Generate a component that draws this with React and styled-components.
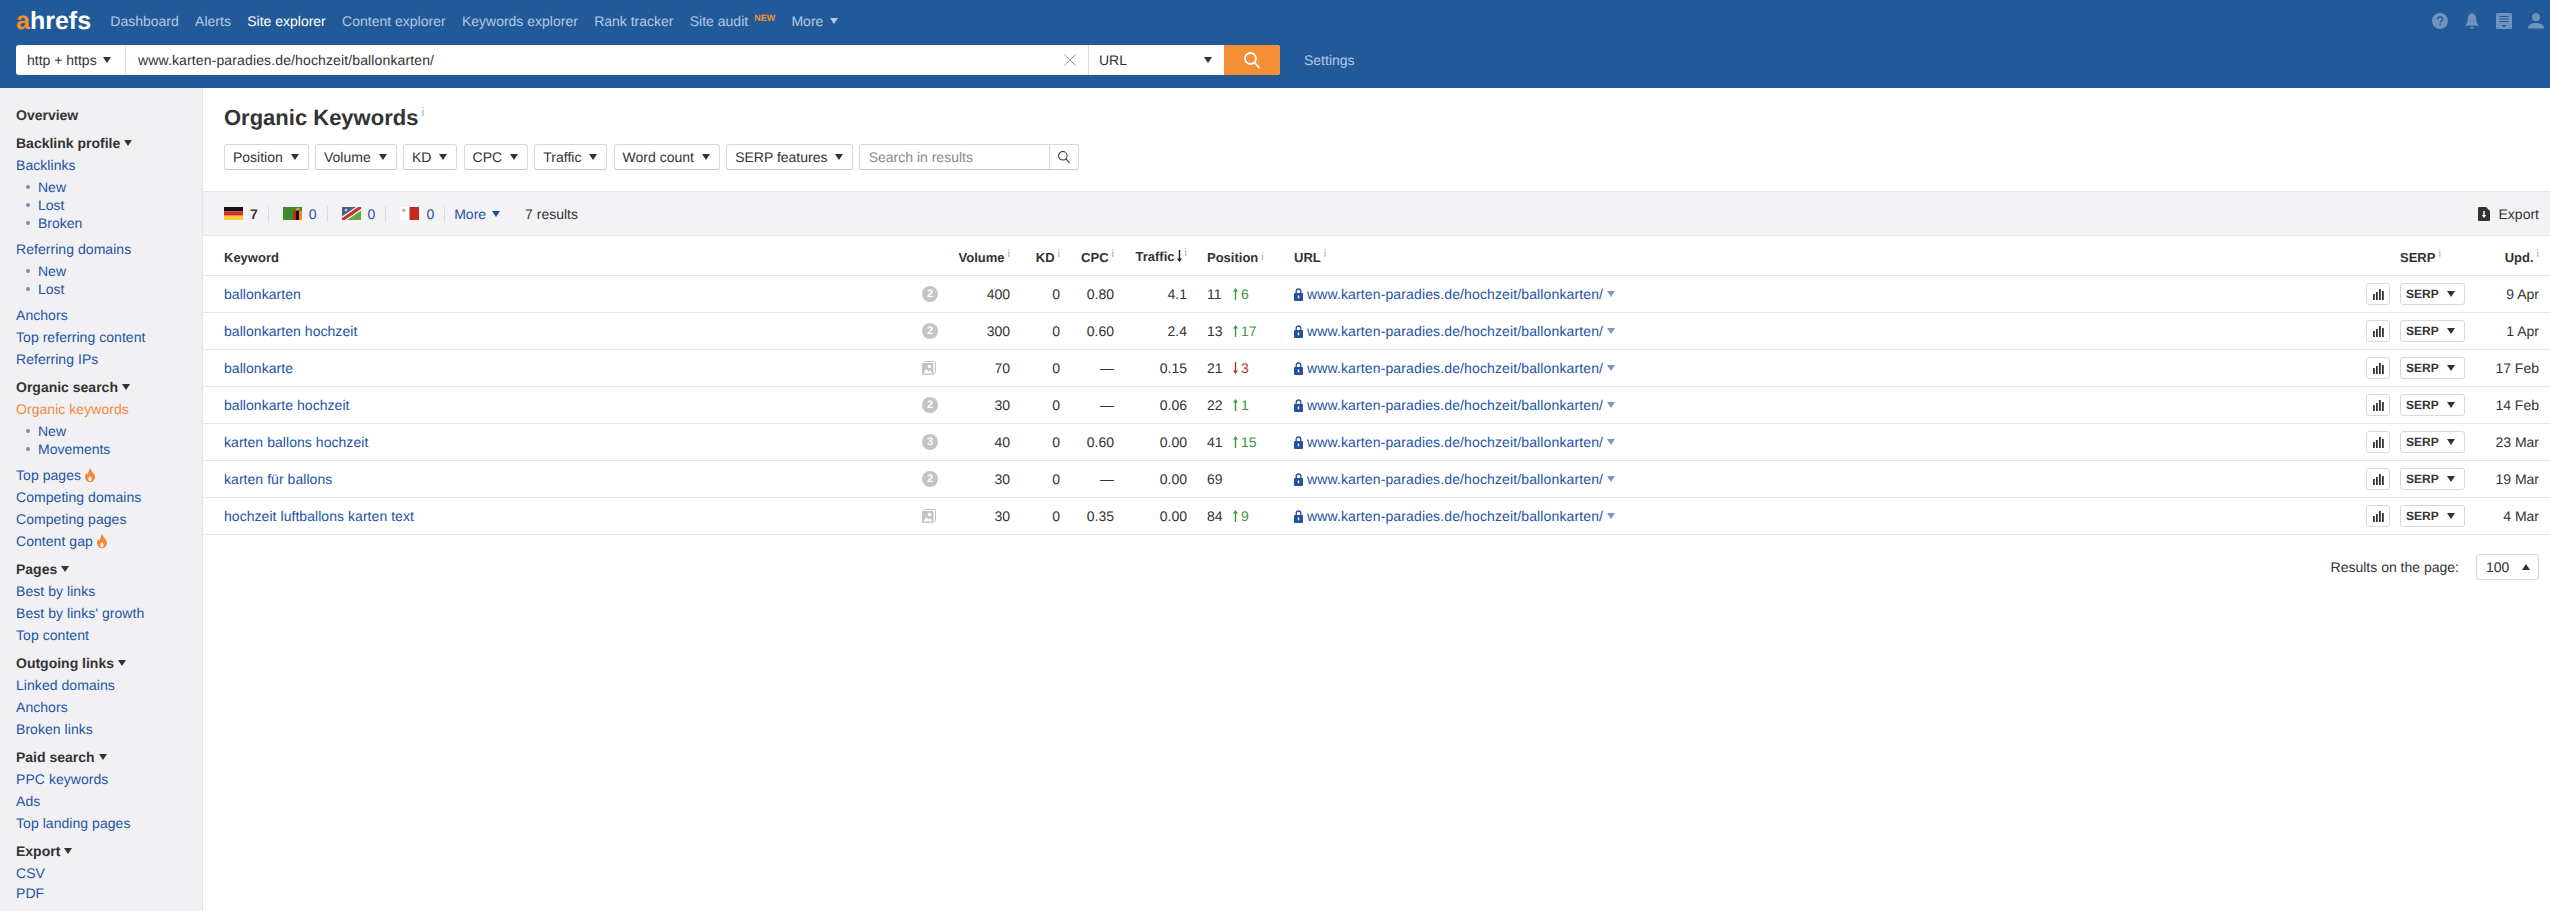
import React from 'react';
import styled, { createGlobalStyle } from 'styled-components';

const GlobalStyle = createGlobalStyle`
  html, body {
    margin: 0;
    padding: 0;
    background: #fff;
    font-family: "Liberation Sans", Arial, sans-serif;
    font-size: 14px;
    color: #333;
    text-rendering: geometricPrecision;
  }
  * { box-sizing: border-box; }
`;

const navItems = ['Dashboard', 'Alerts', 'Site explorer', 'Content explorer', 'Keywords explorer', 'Rank tracker'];

const sidebar = [
  { head: 'Overview', plain: true },
  {
    head: 'Backlink profile',
    links: [
      { label: 'Backlinks', sub: ['New', 'Lost', 'Broken'] },
      { label: 'Referring domains', sub: ['New', 'Lost'] },
      { label: 'Anchors' },
      { label: 'Top referring content' },
      { label: 'Referring IPs' },
    ],
  },
  {
    head: 'Organic search',
    links: [
      { label: 'Organic keywords', active: true, sub: ['New', 'Movements'] },
      { label: 'Top pages', hot: true },
      { label: 'Competing domains' },
      { label: 'Competing pages' },
      { label: 'Content gap', hot: true },
    ],
  },
  { head: 'Pages', links: [{ label: 'Best by links' }, { label: "Best by links' growth" }, { label: 'Top content' }] },
  {
    head: 'Outgoing links',
    links: [{ label: 'Linked domains' }, { label: 'Anchors' }, { label: 'Broken links' }],
  },
  { head: 'Paid search', links: [{ label: 'PPC keywords' }, { label: 'Ads' }, { label: 'Top landing pages' }] },
  { head: 'Export', links: [{ label: 'CSV' }, { label: 'PDF', tight: true }] },
];

const filters = ['Position', 'Volume', 'KD', 'CPC', 'Traffic', 'Word count', 'SERP features'];

const rows = [
  { kw: 'ballonkarten', serp: '2', vol: '400', cpc: '0.80', traffic: '4.1', pos: '11', change: 6, date: '9 Apr' },
  { kw: 'ballonkarten hochzeit', serp: '2', vol: '300', cpc: '0.60', traffic: '2.4', pos: '13', change: 17, date: '1 Apr' },
  { kw: 'ballonkarte', serp: 'img', vol: '70', cpc: '—', traffic: '0.15', pos: '21', change: -3, date: '17 Feb' },
  { kw: 'ballonkarte hochzeit', serp: '2', vol: '30', cpc: '—', traffic: '0.06', pos: '22', change: 1, date: '14 Feb' },
  { kw: 'karten ballons hochzeit', serp: '3', vol: '40', cpc: '0.60', traffic: '0.00', pos: '41', change: 15, date: '23 Mar' },
  { kw: 'karten für ballons', serp: '2', vol: '30', cpc: '—', traffic: '0.00', pos: '69', date: '19 Mar' },
  { kw: 'hochzeit luftballons karten text', serp: 'img', vol: '30', cpc: '0.35', traffic: '0.00', pos: '84', change: 9, date: '4 Mar' },
];

const FlagDE = () => (
  <svg width="19" height="13" viewBox="0 0 19 13">
    <rect width="19" height="4.4" fill="#111" />
    <rect y="4.4" width="19" height="4.3" fill="#d32f23" />
    <rect y="8.7" width="19" height="4.3" fill="#fbcb3c" />
  </svg>
);

const FlagZM = () => (
  <svg width="19" height="13" viewBox="0 0 19 13">
    <rect width="19" height="13" fill="#3f8a2a" />
    <rect x="10" y="4" width="3" height="9" fill="#c8281f" />
    <rect x="13" y="4" width="3" height="9" fill="#151515" />
    <rect x="16" y="4" width="3" height="9" fill="#ea8a2e" />
    <rect x="13" y="1" width="4" height="2" fill="#ea8a2e" />
  </svg>
);

const FlagNA = () => (
  <svg width="19" height="13" viewBox="0 0 19 13">
    <rect width="19" height="13" fill="#6aa744" />
    <polygon points="0,0 19,0 0,13" fill="#3f5fa8" />
    <polygon points="0,9.5 14,0 19,0 19,3.5 5,13 0,13" fill="#fff" />
    <polygon points="0,11 16,0 19,0 19,2 3,13 0,13" fill="#c9352c" />
    <circle cx="4" cy="3" r="1.3" fill="#f5d547" />
  </svg>
);

const FlagMT = () => (
  <svg width="19" height="13" viewBox="0 0 19 13">
    <rect width="9.5" height="13" fill="#fff" />
    <rect x="9.5" width="9.5" height="13" fill="#c4281c" />
    <path d="M2 2.8h1.2V1.6h1.2v1.2h1.2V4H4.4v1.2H3.2V4H2z" fill="#a9a9a9" />
  </svg>
);

const countries = [
  { Flag: FlagDE, count: 7, current: true },
  { Flag: FlagZM, count: 0 },
  { Flag: FlagNA, count: 0 },
  { Flag: FlagMT, count: 0 },
];

const Flame = () => (
  <svg width="10" height="14" viewBox="0 0 10 14">
    <path
      d="M5.400 0c.5 2.200 1.300 3 2.400 4.400C8.900 5.800 10 7 10 9c0 2.900-2.200 5-5 5S0 11.900 0 9c0-1.900.9-3.200 1.900-4.300.1 1 .4 1.700 1.100 2.300C3 4.300 3.800 1.800 5.400 0zM5 8c-.9 1-1.700 2-1.700 3.200 0 1 .7 1.800 1.700 1.800s1.700-.8 1.700-1.800C6.700 10 5.800 9 5 8z"
      fill="#ef8a3c"
    />
  </svg>
);

const SearchGlyph = ({ size = 18, color = '#fff', width = 1.8 }) => (
  <svg width={size} height={size} viewBox="0 0 18 18" fill="none" stroke={color} strokeWidth={width}>
    <circle cx="7.500" cy="7.500" r="5.500" />
    <path d="M11.500 11.500 16 16.500" strokeLinecap="round" />
  </svg>
);

const HelpIcon = () => (
  <svg width="16" height="16" viewBox="0 0 16 16">
    <circle cx="8" cy="8" r="8" fill="#6d93bf" />
    <path d="M5.600 6.200C5.700 4.700 6.700 4 8.100 4c1.400 0 2.400.8 2.400 2 0 1-.6 1.500-1.300 2-.6.400-.8.700-.8 1.300" fill="none" stroke="#225a99" strokeWidth="1.500" />
    <rect x="7.400" y="10.500" width="1.500" height="1.600" fill="#225a99" />
  </svg>
);

const BellIcon = () => (
  <svg width="16" height="16" viewBox="0 0 16 16" fill="#6d93bf">
    <path d="M8 0c.7 0 1.100.5 1.100 1.100 2 .5 3.100 2.200 3.100 4.300 0 3.300.9 5 2.300 6.300v1H1.500v-1c1.400-1.300 2.300-3 2.300-6.300 0-2.100 1.100-3.800 3.100-4.300C6.900.5 7.300 0 8 0z" />
    <rect x="6.300" y="14" width="3.400" height="1.700" rx=".8" />
  </svg>
);

const NewsIcon = () => (
  <svg width="16" height="16" viewBox="0 0 16 16">
    <rect width="16" height="16" rx="1.500" fill="#6d93bf" />
    <path d="M3.500 3.500h9M3.500 6h9M3.500 8.500h9" stroke="#225a99" strokeWidth="1" />
    <path d="M5 12h6l-3 2.500z" fill="#225a99" />
  </svg>
);

const UserIcon = () => (
  <svg width="16" height="16" viewBox="0 0 16 16" fill="#6d93bf">
    <circle cx="8" cy="4.200" r="4" />
    <path d="M0 15.500c0-3.500 3.200-5.500 8-5.500s8 2 8 5.500z" />
  </svg>
);

const LockIcon = () => (
  <svg width="9" height="13" viewBox="0 0 9 13">
    <path d="M2.200 5V3.300C2.200 1.800 3.200 1 4.500 1s2.300.8 2.300 2.300V5" fill="none" stroke="#24509f" strokeWidth="1.300" />
    <rect y="5" width="9" height="8" rx="1" fill="#24509f" />
    <rect x="3.800" y="7.500" width="1.400" height="2.800" fill="#fff" />
  </svg>
);

const ChangeArrow = ({ down, color }) => (
  <svg width="5" height="12" viewBox="0 0 5 12" fill={color}>
    {down ? (
      <path d="M1.800 0h1.400v8.500H5L2.500 12 0 8.500h1.800z" />
    ) : (
      <path d="M1.800 12h1.400V3.500H5L2.500 0 0 3.500h1.800z" />
    )}
  </svg>
);

const BarsIcon = () => (
  <svg width="11" height="11" viewBox="0 0 11 11" fill="#333">
    <rect y="5" width="1.800" height="6" />
    <rect x="3" y="3" width="1.800" height="8" />
    <rect x="6" y="0" width="1.800" height="11" />
    <rect x="9" y="2" width="1.800" height="9" />
  </svg>
);

const ImageStack = () => (
  <svg width="14" height="14" viewBox="0 0 14 14">
    <rect x="2.500" y=".5" width="11" height="12" rx="1" fill="none" stroke="#c4c4c4" />
    <rect y="2" width="11.500" height="12" rx="1" fill="#c4c4c4" />
    <circle cx="7.500" cy="5.500" r="1.800" fill="#fff" />
    <path d="M1.500 12.500 4.200 8 6.500 10.500 8 9l2.500 3.500z" fill="#fff" />
  </svg>
);

const ExportIcon = () => (
  <svg width="12" height="14" viewBox="0 0 12 14">
    <path d="M1 0h7l4 4v9a1 1 0 0 1-1 1H1a1 1 0 0 1-1-1V1a1 1 0 0 1 1-1z" fill="#333" />
    <path d="M6 4v5" stroke="#fff" strokeWidth="1.400" />
    <path d="M3.800 8h4.400L6 11z" fill="#fff" />
  </svg>
);

const CloseIcon = () => (
  <svg width="12" height="12" viewBox="0 0 12 12" stroke="#999" strokeWidth="1">
    <path d="M.5.500l11 11M11.500.500l-11 11" />
  </svg>
);

const App = () => (
  <Page>
    <GlobalStyle />
    <Header>
      <NavRow>
        <Logo><LogoA>a</LogoA>hrefs</Logo>
        {navItems.map((item) => (
          <NavLink key={item} $active={item === 'Site explorer'}>{item}</NavLink>
        ))}
        <NavLink>Site audit<NewTag>NEW</NewTag></NavLink>
        <NavLink>More<Caret $color="#b4c9e2" $left={7} /></NavLink>
        <NavIcons>
          <HelpIcon />
          <BellIcon />
          <NewsIcon />
          <UserIcon />
        </NavIcons>
      </NavRow>
      <SearchRow>
        <SearchBar>
          <Protocol>http + https<Caret $left={6} /></Protocol>
          <UrlField>
            <UrlValue>www.karten-paradies.de/hochzeit/ballonkarten/</UrlValue>
            <CloseIcon />
          </UrlField>
          <ModeSelect>URL<Caret /></ModeSelect>
          <SearchButton><SearchGlyph /></SearchButton>
        </SearchBar>
        <SettingsLink>Settings</SettingsLink>
      </SearchRow>
    </Header>

    <Body>
      <Sidebar>
        {sidebar.map((group) => (
          <SideGroup key={group.head}>
            <SideHead>
              {group.head}
              {!group.plain && <Caret $left={4} />}
            </SideHead>
            {group.links && group.links.map((link) => (
              <React.Fragment key={link.label}>
                <SideLink $active={link.active} $tight={link.tight}>
                  {link.label}
                  {link.hot && <Flame />}
                </SideLink>
                {link.sub && (
                  <SubList>
                    {link.sub.map((s) => <SubItem key={s}>{s}</SubItem>)}
                  </SubList>
                )}
              </React.Fragment>
            ))}
          </SideGroup>
        ))}
      </Sidebar>

      <Main>
        <TitleBlock>
          <Title>Organic Keywords<TitleInfo>i</TitleInfo></Title>
          <Filters>
            {filters.map((f) => (
              <FilterButton key={f}>{f}<Caret /></FilterButton>
            ))}
            <SearchResults>
              <Placeholder>Search in results</Placeholder>
              <SearchResultsButton>
                <SearchGlyph size={14} color="#333" width={1.300} />
              </SearchResultsButton>
            </SearchResults>
          </Filters>
        </TitleBlock>

        <Toolbar>
          {countries.map(({ Flag, count, current }, i) => (
            <Country key={i}>
              <Flag />
              <Count $current={current}>{count}</Count>
            </Country>
          ))}
          <MoreLink>More<Caret $color="#24509f" $left={6} /></MoreLink>
          <Results>7 results</Results>
          <ExportLink><ExportIcon />Export</ExportLink>
        </Toolbar>

        <HeadRow>
          <span>Keyword</span>
          <span />
          <RightCell>Volume<Info>i</Info></RightCell>
          <RightCell>KD<Info>i</Info></RightCell>
          <RightCell>CPC<Info>i</Info></RightCell>
          <RightCell>
            Traffic
            <SortArrow><ChangeArrow down color="#222" /></SortArrow>
            <Info>i</Info>
          </RightCell>
          <PosCell>Position<Info>i</Info></PosCell>
          <span>URL<Info>i</Info></span>
          <span />
          <span>SERP<Info>i</Info></span>
          <RightCell>Upd.<Info>i</Info></RightCell>
        </HeadRow>

        {rows.map((r) => (
          <DataRow key={r.kw}>
            <KeywordLink>{r.kw}</KeywordLink>
            {r.serp === 'img' ? <ImageStack /> : <SerpBadge>{r.serp}</SerpBadge>}
            <RightCell>{r.vol}</RightCell>
            <RightCell>0</RightCell>
            <RightCell>{r.cpc}</RightCell>
            <RightCell>{r.traffic}</RightCell>
            <PosCell>
              <PosValue>{r.pos}</PosValue>
              {r.change !== undefined && (
                <Change $down={r.change < 0}>
                  <ChangeArrow down={r.change < 0} color={r.change < 0 ? '#b5352a' : '#3f963f'} />
                  {Math.abs(r.change)}
                </Change>
              )}
            </PosCell>
            <UrlCell>
              <LockIcon />
              <UrlLink>www.karten-paradies.de/hochzeit/ballonkarten/</UrlLink>
              <Caret $color="#7f95c8" />
            </UrlCell>
            <ChartButton><BarsIcon /></ChartButton>
            <SerpButton>SERP<Caret /></SerpButton>
            <RightCell>{r.date}</RightCell>
          </DataRow>
        ))}

        <Footer>
          Results on the page:
          <PageSize>100<Caret $up /></PageSize>
        </Footer>
      </Main>
    </Body>
  </Page>
);

const Page = styled.div`
  min-height: 100vh;
  display: flex;
  flex-direction: column;
`;

const Header = styled.header`
  background: #225a99;
  height: 88px;
  padding: 0 6px 0 16px;
`;

const NavRow = styled.nav`
  height: 42px;
  margin-bottom: 3px;
  display: flex;
  align-items: center;
  gap: 16.3px;
`;

const Logo = styled.div`
  width: 78px;
  font-size: 25px;
  font-weight: 700;
  color: #fff;
`;

const LogoA = styled.span`
  color: #f48f2f;
`;

const NavLink = styled.a`
  display: inline-flex;
  align-items: center;
  font-size: 14px;
  color: ${(p) => (p.$active ? '#fff' : '#b4c9e2')};
`;

const NewTag = styled.span`
  font-size: 9px;
  font-weight: 700;
  color: #f48f2f;
  margin: -6px 0 0 6px;
`;

const NavIcons = styled.div`
  margin-left: auto;
  display: flex;
  gap: 16px;
`;

const Caret = styled.i`
  display: inline-block;
  flex: none;
  width: 0;
  height: 0;
  margin-left: ${(p) => p.$left || 0}px;
  border-left: 4px solid transparent;
  border-right: 4px solid transparent;
  ${(p) => (p.$up ? 'border-bottom' : 'border-top')}: 6px solid ${(p) => p.$color || '#333'};
`;

const SearchRow = styled.div`
  display: flex;
  align-items: center;
`;

const SearchBar = styled.div`
  width: 1264px;
  height: 30px;
  display: flex;
  background: #fff;
  border-radius: 3px;
  overflow: hidden;
`;

const Protocol = styled.div`
  width: 110px;
  padding-left: 11px;
  display: flex;
  align-items: center;
  border-right: 1px solid #ddd;
`;

const UrlField = styled.div`
  flex: 1;
  padding: 0 12px;
  display: flex;
  align-items: center;
  justify-content: space-between;
`;

const UrlValue = styled.span`
  letter-spacing: 0.13px;
`;

const ModeSelect = styled.div`
  width: 136px;
  padding: 0 12px 0 10px;
  display: flex;
  align-items: center;
  justify-content: space-between;
  border-left: 1px solid #ddd;
`;

const SearchButton = styled.div`
  width: 56px;
  background: #f48f35;
  display: flex;
  align-items: center;
  justify-content: center;
`;

const SettingsLink = styled.a`
  margin-left: 24px;
  color: #b4c9e2;
`;

const Body = styled.div`
  flex: 1;
  display: flex;
`;

const Sidebar = styled.aside`
  width: 203px;
  flex: none;
  background: #f1f1f4;
  border-right: 1px solid #e4e4e7;
  padding: 16px 0 0 16px;
`;

const SideGroup = styled.div`
  margin-bottom: 6px;
`;

const SideHead = styled.div`
  line-height: 22px;
  font-weight: 700;
  color: #333;
  display: flex;
  align-items: center;
`;

const SideLink = styled.a`
  display: flex;
  align-items: center;
  gap: 4px;
  line-height: ${(p) => (p.$tight ? 18 : 22)}px;
  letter-spacing: 0.05px;
  color: ${(p) => (p.$active ? '#ef8a3c' : '#2453a5')};
`;

const SubList = styled.ul`
  list-style: none;
  margin: 2px 0 6px;
  padding: 0 0 0 22px;
`;

const SubItem = styled.li`
  position: relative;
  line-height: 18px;
  color: #2453a5;

  &::before {
    content: '';
    position: absolute;
    left: -12px;
    top: 7px;
    width: 4px;
    height: 4px;
    border-radius: 50%;
    background: #6f8dc4;
  }
`;

const Main = styled.main`
  flex: 1;
  min-width: 0;
`;

const TitleBlock = styled.div`
  padding: 17px 21px 21px;
`;

const Title = styled.h1`
  margin: 0 0 13px;
  font-size: 22px;
  line-height: 26px;
  font-weight: 700;
  color: #333;
`;

const TitleInfo = styled.sup`
  font-size: 12px;
  font-weight: 400;
  color: #aaa;
  margin-left: 3px;
  vertical-align: 9px;
  line-height: 0;
`;

const Filters = styled.div`
  display: flex;
  gap: 6.2px;
`;

const FilterButton = styled.div`
  height: 26px;
  padding: 0 9px 0 8px;
  display: flex;
  align-items: center;
  gap: 8px;
  border: 1px solid #d8d8d8;
  border-bottom-color: #c8c8c8;
  border-radius: 3px;
  background: #fff;
`;

const SearchResults = styled.div`
  width: 220px;
  height: 26px;
  margin-left: -1px;
  display: flex;
  border: 1px solid #d8d8d8;
  border-bottom-color: #c8c8c8;
  border-radius: 3px;
`;

const Placeholder = styled.div`
  flex: 1;
  padding-left: 9px;
  line-height: 24px;
  color: #8a8a8a;
`;

const SearchResultsButton = styled.div`
  width: 29px;
  border-left: 1px solid #d8d8d8;
  display: flex;
  align-items: center;
  justify-content: center;
`;

const Toolbar = styled.div`
  height: 45px;
  padding: 0 11px 0 21px;
  display: flex;
  align-items: center;
  background: #f3f3f6;
  border-top: 1px solid #e6e6e8;
  border-bottom: 1px solid #e6e6e8;
`;

const Country = styled.div`
  display: flex;
  align-items: center;
  gap: 7px;
  height: 16px;
  padding-right: 10px;
  margin-right: 14px;
  border-right: 1px solid #dcdcdf;
`;

const Count = styled.span`
  color: ${(p) => (p.$current ? '#333' : '#2453a5')};
  font-weight: ${(p) => (p.$current ? 700 : 400)};
`;

const MoreLink = styled.a`
  margin-left: -5px;
  display: flex;
  align-items: center;
  color: #2453a5;
`;

const Results = styled.span`
  margin-left: 25px;
`;

const ExportLink = styled.a`
  margin-left: auto;
  display: flex;
  align-items: center;
  gap: 9px;
`;

const tableColumns = '698px 16px 72px 50px 54px 73px 107px 1fr 34px 80px 59px';

const HeadRow = styled.div`
  height: 40px;
  padding: 3px 11px 0 21px;
  display: grid;
  grid-template-columns: ${tableColumns};
  align-items: center;
  font-size: 13px;
  font-weight: 700;
  border-bottom: 1px solid #e6e6e8;
`;

const DataRow = styled.div`
  height: 37px;
  padding: 0 11px 0 21px;
  display: grid;
  grid-template-columns: ${tableColumns};
  align-items: center;
  border-bottom: 1px solid #e6e6e8;
`;

const RightCell = styled.div`
  text-align: right;
  white-space: nowrap;
`;

const PosCell = styled.div`
  padding-left: 20px;
  white-space: nowrap;
  display: flex;
  align-items: center;
`;

const Info = styled.span`
  font-size: 11px;
  font-weight: 400;
  color: #aaa;
  margin-left: 3px;
  vertical-align: 5px;
  line-height: 0;
`;

const SortArrow = styled.span`
  margin-left: 2px;
  vertical-align: -1px;
`;

const KeywordLink = styled.a`
  color: #2453a5;
  letter-spacing: 0.05px;
`;

const UrlLink = styled.a`
  color: #2453a5;
  letter-spacing: 0.13px;
`;

const SerpBadge = styled.span`
  width: 16px;
  height: 16px;
  border-radius: 50%;
  background: #c4c4c4;
  color: #fff;
  font-size: 11px;
  font-weight: 700;
  line-height: 16px;
  text-align: center;
`;

const PosValue = styled.span`
  width: 26px;
`;

const Change = styled.span`
  display: inline-flex;
  align-items: center;
  gap: 3px;
  color: ${(p) => (p.$down ? '#b5352a' : '#3f963f')};
`;

const UrlCell = styled.div`
  display: flex;
  align-items: center;
  gap: 4px;
`;

const ChartButton = styled.div`
  width: 24px;
  height: 22px;
  display: flex;
  align-items: center;
  justify-content: center;
  border: 1px solid #d8d8d8;
  border-radius: 3px;
`;

const SerpButton = styled.div`
  width: 65px;
  height: 22px;
  padding: 0 9px 0 5px;
  display: flex;
  align-items: center;
  justify-content: space-between;
  font-size: 12px;
  font-weight: 700;
  border: 1px solid #d8d8d8;
  border-radius: 3px;
`;

const Footer = styled.div`
  margin-top: 19px;
  padding-right: 11px;
  display: flex;
  align-items: center;
  justify-content: flex-end;
  gap: 17px;
`;

const PageSize = styled.div`
  width: 63px;
  height: 26px;
  padding: 0 8px 0 9px;
  display: flex;
  align-items: center;
  justify-content: space-between;
  border: 1px solid #d8d8d8;
  border-radius: 3px;
`;

export default App;
